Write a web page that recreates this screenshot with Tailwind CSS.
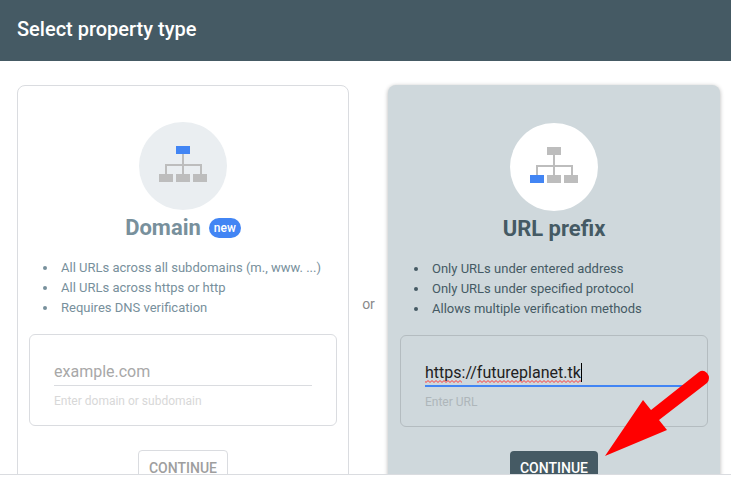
<!DOCTYPE html>
<html lang="en">
<head>
    <meta charset="UTF-8">
    <meta name="viewport" content="width=device-width, initial-scale=1.0">
    <title>Select property type</title>
    <script src="https://cdn.jsdelivr.net/npm/@tailwindcss/browser@4"></script>
</head>
<body class="flex flex-col h-screen overflow-hidden bg-white font-['Roboto',sans-serif]">
    <header class="shrink-0 bg-[#455a64] px-[17px] pt-[15px] pb-[17px]">
        <h1 class="text-xl leading-[29px] font-medium text-white">Select property type</h1>
    </header>

    <main class="flex-1 min-h-0 overflow-hidden border-b border-[#dadce0] mb-[3px]">
        <div class="flex items-center pt-6 pb-6 pl-[17px] pr-[11px]">
            <!-- Domain -->
            <section class="flex-1 flex flex-col items-center border border-[#dadce0] rounded-lg px-[11px] pt-9 pb-9">
                <div class="size-[88px] rounded-full bg-[#eaeef1] flex items-start justify-center pt-6">
                    <svg width="48" height="36" viewBox="0 0 48 36" aria-hidden="true">
                        <path d="M23 8h2v10h18v10h-2v-8H25v8h-2v-8H8v8H6V18h17z" fill="#bdbdbd"/>
                        <path d="M0 28h14v8H0zM17 28h14v8H17zM34 28h14v8H34z" fill="#bdbdbd"/>
                        <path d="M17 0h14v8H17z" fill="#4285f4"/>
                    </svg>
                </div>
                <div class="mt-1 flex items-center gap-2">
                    <h2 class="text-[22px] leading-7 font-bold text-[#78909c]">Domain</h2>
                    <span class="rounded-full bg-[#4285f4] px-[5px] text-xs leading-5 font-medium text-white">new</span>
                </div>
                <ul class="mt-4 w-full pl-[14px] text-[13px] leading-5 text-[#78909c]">
                    <li class="flex items-center gap-[14px] before:size-1 before:rounded-full before:bg-current">All URLs across all subdomains (m., www. ...)</li>
                    <li class="flex items-center gap-[14px] before:size-1 before:rounded-full before:bg-current">All URLs across https or http</li>
                    <li class="flex items-center gap-[14px] before:size-1 before:rounded-full before:bg-current">Requires DNS verification</li>
                </ul>
                <div class="mt-4 w-full border border-[#dadce0] rounded-md px-6 pt-6 pb-4">
                    <input id="domain" type="text" placeholder="example.com" aria-label="Domain" aria-describedby="domainHint"
                           class="block w-full h-[27px] pb-[2px] border-b border-[#dadce0] text-base placeholder:text-[#a8a8a8] outline-none">
                    <p id="domainHint" class="mt-[7px] text-xs leading-4 text-[#d8d8d8]">Enter domain or subdomain</p>
                </div>
                <button type="button" class="mt-6 h-9 px-[10px] border border-[#dadce0] rounded-sm text-sm font-medium text-[#9e9e9e]">CONTINUE</button>
            </section>

            <div class="w-[39px] text-center text-sm text-[#8a8a8a]">or</div>

            <!-- URL prefix -->
            <section class="relative flex-1 flex flex-col items-center rounded-lg bg-[#cfd8dc] shadow-[0_1px_4px_rgba(0,0,0,0.3)] px-3 pt-[38px] pb-[38px]">
                <div class="size-[88px] rounded-full bg-white flex items-start justify-center pt-6">
                    <svg width="48" height="36" viewBox="0 0 48 36" aria-hidden="true">
                        <path d="M23 8h2v10h18v10h-2v-8H25v8h-2v-8H8v8H6V18h17z" fill="#bdbdbd"/>
                        <path d="M17 0h14v8H17zM17 28h14v8H17zM34 28h14v8H34z" fill="#bdbdbd"/>
                        <path d="M0 28h14v8H0z" fill="#4285f4"/>
                    </svg>
                </div>
                <h2 class="mt-1 text-[22px] leading-7 font-bold text-[#455a64]">URL prefix</h2>
                <ul class="mt-4 w-full pl-[14px] text-[13px] leading-5 text-[#455a64]">
                    <li class="flex items-center gap-[14px] before:size-1 before:rounded-full before:bg-current">Only URLs under entered address</li>
                    <li class="flex items-center gap-[14px] before:size-1 before:rounded-full before:bg-current">Only URLs under specified protocol</li>
                    <li class="flex items-center gap-[14px] before:size-1 before:rounded-full before:bg-current">Allows multiple verification methods</li>
                </ul>
                <div class="mt-4 w-full border border-[#b4bcc0] rounded-md px-6 pt-6 pb-4">
                    <div class="relative">
                        <input id="urlPrefix" type="text" value="https://futureplanet.tk" spellcheck="false" aria-label="URL prefix" aria-describedby="urlHint"
                               class="block w-full h-[27px] border-b-2 border-[#4285f4] text-base text-[#212121] outline-none">
                        <!-- spelling marks and caret -->
                        <svg class="absolute left-0 top-0" width="160" height="24" aria-hidden="true">
                            <defs>
                                <pattern id="squiggle" width="4" height="3" y="20" patternUnits="userSpaceOnUse">
                                    <path d="M-1 .5L1 2.500L3 .5L5 2.500" fill="none" stroke="#f33" stroke-width="1"/>
                                </pattern>
                            </defs>
                            <path d="M0 20h37v3H0zM52 20h104v3H52z" fill="url(#squiggle)"/>
                            <path d="M156 3h1v19h-1z" fill="#000"/>
                        </svg>
                    </div>
                    <p id="urlHint" class="mt-[7px] text-xs leading-4 text-[#aeb6ba]">Enter URL</p>
                </div>
                <button type="button" class="mt-6 h-[34px] px-[10px] rounded-sm bg-[#455a64] text-sm font-medium text-white">CONTINUE</button>

                <svg class="absolute right-[10px] top-[284px]" width="106" height="88" viewBox="0 0 106 88" aria-hidden="true">
                    <path d="M1 87L39 31L47 41L95 3Q99 0 103 4Q107 9 103 14L55 51L63 61Z" fill="#f00"/>
                </svg>
            </section>
        </div>
    </main>
</body>
</html>
